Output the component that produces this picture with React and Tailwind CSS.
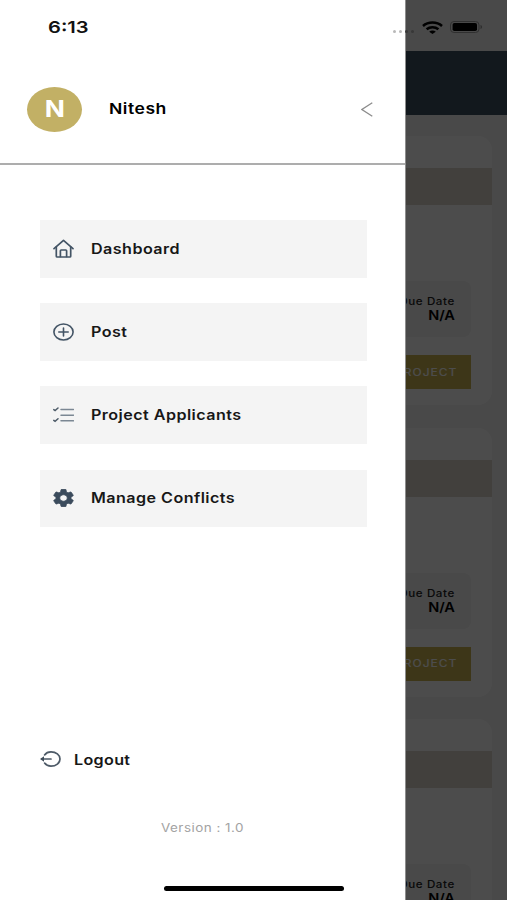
import React from "react";

const HomeIcon = () => (
	<svg
		viewBox="0 0 21 19"
		className="w-[21px] h-[19px]"
		fill="none"
		stroke="#435465"
		strokeWidth="1.700"
		strokeLinecap="round"
		strokeLinejoin="round"
	>
		<path d="M1 9.600L10.500 1.300 20 9.600" />
		<path d="M3.300 8v9.200c0 .5.400.8.900.8h12.600c.5 0 .9-.3.900-.8V8" />
		<path d="M7.400 17.500v-5.700c0-.5.300-.8.800-.8h4.600c.5 0 .8.300.8.800v5.700" />
	</svg>
);

const PlusCircleIcon = () => (
	<svg
		viewBox="0 0 21 18"
		className="w-[21px] h-[18px]"
		fill="none"
		stroke="#435465"
		strokeWidth="1.600"
		strokeLinecap="round"
	>
		<ellipse cx="10.500" cy="9" rx="9.600" ry="8" />
		<path d="M5.800 9h9.400M10.500 5v8" />
	</svg>
);

const ChecklistIcon = () => (
	<svg
		viewBox="0 0 21 16"
		className="w-[21px] h-4"
		fill="none"
		stroke="#7b8793"
		strokeWidth="1.500"
		strokeLinecap="round"
	>
		<path d="M8 2.500h12.500M8 8.200h12.500M8 13.800h12.500" />
		<path stroke="#4c5a67" d="M.8 2.600l1.300 1L5 1M.8 13.400l1.300 1L5 11.800" />
	</svg>
);

// gear stretched a little wider than tall, like the other menu icons
const GearIcon = () => (
	<svg
		viewBox="2 2 20 20"
		preserveAspectRatio="none"
		className="w-[21px] h-[18px]"
		fill="#3b4b5c"
		stroke="#3b4b5c"
		strokeWidth=".8"
		strokeLinejoin="round"
	>
		<path d="M19.140 12.940c.04-.3.060-.610.060-.940 0-.320-.020-.640-.070-.940l2.030-1.580a.49.490 0 0 0 .120-.610l-1.920-3.320a.488.488 0 0 0-.590-.220l-2.390.960c-.5-.380-1.030-.7-1.620-.940l-.360-2.540a.484.484 0 0 0-.480-.410h-3.840c-.240 0-.430.170-.470.410l-.360 2.540c-.590.240-1.130.570-1.620.940l-2.390-.960c-.220-.080-.470 0-.590.220L2.740 8.870c-.120.210-.080.470.120.610l2.030 1.580c-.050.3-.090.630-.090.940s.020.640.070.940l-2.030 1.580a.49.490 0 0 0-.120.610l1.920 3.320c.120.220.370.290.590.220l2.390-.960c.5.380 1.030.7 1.620.940l.360 2.540c.050.240.240.410.480.410h3.840c.240 0 .440-.170.470-.410l.360-2.540c.590-.240 1.130-.560 1.620-.940l2.390.960c.220.080.470 0 .590-.220l1.920-3.320c.120-.220.070-.470-.120-.610l-2.010-1.580zM12 15.600c-1.980 0-3.600-1.620-3.600-3.600s1.620-3.600 3.600-3.600 3.600 1.620 3.600 3.600-1.620 3.600-3.600 3.600z" />
	</svg>
);

const LogoutIcon = () => (
	<svg
		viewBox="0 0 21 16"
		className="w-[21px] h-4"
		fill="none"
		stroke="#4d5a67"
		strokeWidth="1.700"
		strokeLinecap="round"
	>
		<path d="M4.600 3.900C6 1.900 8.300.9 11 .9c5 0 9 3.100 9 7.100s-4 7.100-9 7.100c-2.700 0-5-1-6.400-3" />
		<path d="M2 8h9" />
		<path d="M0 8l4-2.800v5.600z" fill="#3e4c59" stroke="none" />
	</svg>
);

const menuItems = [
	{ label: "Dashboard", icon: <HomeIcon /> },
	{ label: "Post", icon: <PlusCircleIcon /> },
	{ label: "Project Applicants", icon: <ChecklistIcon /> },
	{ label: "Manage Conflicts", icon: <GearIcon /> },
];

const ProjectCard = () => (
	<div className="h-[269px] shrink-0 rounded-[14px] bg-white flex flex-col pt-8">
		<div className="h-[37px] bg-[#ddd6cb]" />
		<div className="mt-[76px] mr-[21px] flex justify-end">
			<div className="w-[110px] h-[56px] rounded-lg bg-[#f3f3f3] pt-[14px] pr-4 flex flex-col items-end">
				<span className="origin-right scale-x-[1.16] whitespace-nowrap text-[10px] leading-[13px] tracking-[0.5px] font-medium text-[#222]">
					Due Date
				</span>
				<span className="origin-right scale-x-[1.12] text-[13px] leading-[15px] font-semibold text-black">
					N/A
				</span>
			</div>
		</div>
		<div className="mt-[18px] mr-[21px] flex justify-end">
			<div className="w-[150px] h-[34px] bg-[#cdb550] flex items-center justify-end pr-[14px]">
				<span className="origin-right scale-x-[1.2] whitespace-nowrap text-[10px] tracking-[0.8px] font-medium text-white">
					VIEW PROJECT
				</span>
			</div>
		</div>
	</div>
);

const StatusBar = () => (
	<div className="absolute top-0 left-0 w-full h-[52px] flex items-center justify-between pl-[48px] pr-[24px] pb-px">
		<span className="origin-left scale-x-[1.22] mt-[4px] text-[16.500px] font-semibold text-[#111]">
			6:13
		</span>
		<div className="flex items-center mt-[3px]">
			<div className="flex gap-[3px] mt-2 mr-[8px]">
				<span className="size-[3px] rounded-full bg-[#b9b9b9]" />
				<span className="size-[3px] rounded-full bg-[#b9b9b9]" />
				<span className="size-[3px] rounded-full bg-[#383838]" />
				<span className="size-[3px] rounded-full bg-[#383838]" />
			</div>
			<svg
				viewBox="0 0 21 13"
				className="w-[21px] h-[13px] mr-[7px]"
				fill="none"
				stroke="#000"
				strokeWidth="2.600"
			>
				<path d="M1 4.900C6.200.4 14.800.4 20 4.900" />
				<path d="M4.600 8.300C8 5.500 13 5.500 16.400 8.300" />
				<path
					d="M10.500 13L7.200 10.700c1.800-1.500 4.800-1.500 6.600 0z"
					fill="#000"
					stroke="none"
				/>
			</svg>
			<svg viewBox="0 0 33 12" className="w-[33px] h-3" fill="none">
				<rect x=".5" y=".5" width="28.500" height="11" rx="3.500" stroke="#303030" />
				<rect x="2.600" y="2" width="24.400" height="8" rx="1.800" fill="#000" />
				<path d="M30.500 4v4c1-.4 1.600-1.100 1.600-2s-.6-1.600-1.600-2z" fill="#303030" />
			</svg>
		</div>
	</div>
);

const Drawer = () => (
	<div className="absolute top-0 left-0 w-[406px] h-[900px] bg-white border-r border-[#8d8d8d] flex flex-col">
		<div className="h-[165px] shrink-0 border-b-2 border-[#adadad] pt-[55px] pl-[27px] pr-[32px] flex items-center">
			<div className="w-[55px] h-[45px] rounded-[50%] bg-[#c2b065] flex items-center justify-center">
				<span className="scale-x-[1.15] text-[23px] leading-none font-bold text-white">
					N
				</span>
			</div>
			<span className="ml-[27px] mt-px origin-left scale-x-[1.17] text-[15px] tracking-[0.45px] font-semibold text-black">
				Nitesh
			</span>
			<svg
				viewBox="0 0 12 15"
				className="ml-auto w-3 h-[15px]"
				fill="none"
				stroke="#8c8c8c"
				strokeWidth="1.300"
			>
				<path d="M11.300.7L.9 7.500l10.400 6.800" />
			</svg>
		</div>

		<div className="mt-[55px] ml-10 mr-[38px] flex flex-col gap-[25.400px]">
			{menuItems.map((item) => (
				<div
					key={item.label}
					className="h-[57.800px] bg-[#f4f4f4] flex items-center pl-[10px]"
				>
					<div className="w-[26px] flex justify-center">{item.icon}</div>
					<span className="ml-[15px] -mt-px origin-left scale-x-[1.15] whitespace-nowrap text-[14px] tracking-[0.4px] font-semibold text-[#171717]">
						{item.label}
					</span>
				</div>
			))}
		</div>

		<div className="mt-[222px] ml-10 flex items-center h-5">
			<LogoutIcon />
			<span className="ml-[13px] origin-left scale-x-[1.15] text-[14px] tracking-[0.3px] font-semibold text-[#171717]">
				Logout
			</span>
		</div>

		<div className="mt-[49px] flex justify-center">
			<span className="scale-x-[1.17] text-[11.500px] tracking-[0.4px] leading-5 text-[#a3a3a3]">
				Version : 1.0
			</span>
		</div>
	</div>
);

const App = () => {
	return (
		<div className="relative w-[507px] h-[900px] overflow-hidden bg-[#f4f4f4] font-['Inter',sans-serif]">
			<div className="h-[51px] bg-[#f4f4f4]" />
			<div className="h-16 bg-[#3f5361]" />
			<div className="pt-[21px] px-[15px] flex flex-col gap-[22.500px]">
				<ProjectCard />
				<ProjectCard />
				<ProjectCard />
			</div>

			<div className="absolute inset-0 bg-black/70" />
			<Drawer />
			<StatusBar />
			<div className="absolute left-[164px] bottom-[9px] w-[180px] h-[5px] rounded-full bg-black" />
		</div>
	);
};

export default App;
